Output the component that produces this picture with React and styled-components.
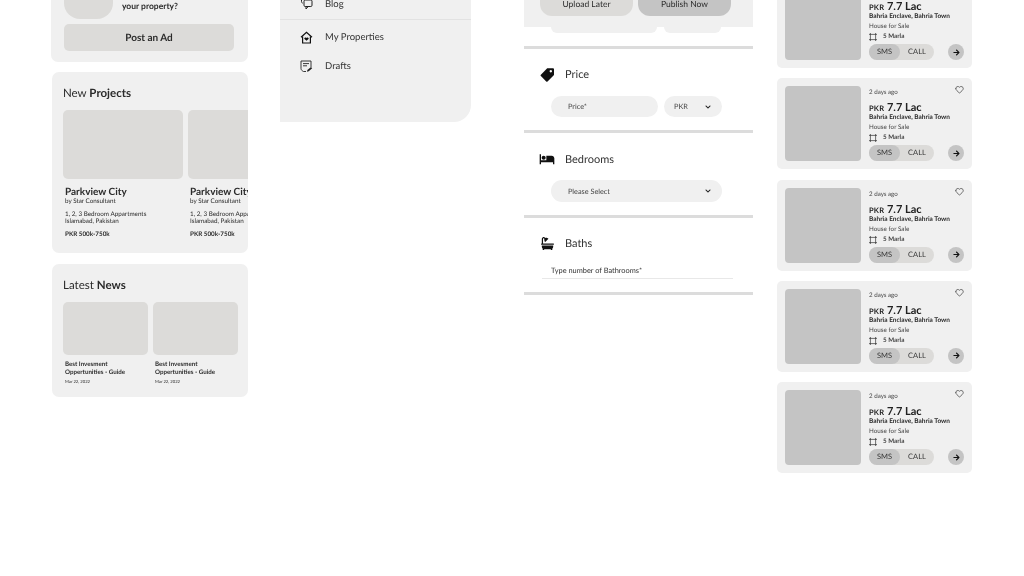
import React from 'react'
import styled, { createGlobalStyle } from 'styled-components'
import { Heart } from 'lucide-react'
import { MdHotel } from 'react-icons/md'
import { FaBath, FaChevronDown, FaArrowRight } from 'react-icons/fa'

const GlobalStyle = createGlobalStyle`
  html, body {
    margin: 0;
    padding: 0;
    background: #fff;
    overflow: hidden;
  }
  * { box-sizing: border-box; }
`

const Page = styled.div`
  width: 1024px;
  height: 576px;
  overflow: hidden;
  display: flex;
  align-items: flex-start;
  padding-left: 52px;
  font-family: Lato, "Liberation Sans", sans-serif;
  text-rendering: geometricPrecision;
  will-change: transform;
  color: #2b2b2b;
`

/* left column */
const LeftColumn = styled.div`
  width: 196px;
  margin-top: -60px;
  display: flex;
  flex-direction: column;
  gap: 11px;
`
const Card = styled.section`
  background: #f0f0f0;
  border-radius: 7px;
  overflow: hidden;
`
const PromoCard = styled(Card)`
  height: 122px;
  margin: 0 0 -1px -1px;
  padding: 60px 14px 0 13px;
`
const PromoTop = styled.div`
  display: flex;
  gap: 9px;
  height: 19px;
`
const Thumb = styled.div`
  width: 49px;
  height: 19px;
  background: #dcdbd9;
  border-radius: 0 0 16px 16px;
`
const PromoText = styled.div`
  font-size: 8.5px;
  font-weight: 700;
  line-height: 12px;
`
const PostButton = styled.div`
  height: 27px;
  margin-top: 5px;
  background: #dcdbd9;
  border-radius: 5px;
  font-size: 10px;
  font-weight: 700;
  line-height: 28px;
  text-align: center;
`
const ProjectsCard = styled(Card)`
  height: 181px;
  padding: 14px 0 0 11px;
`
const NewsCard = styled(Card)`
  height: 133px;
  padding: 14px 0 0 11px;
`
const CardTitle = styled.h2`
  margin: 0 0 8px;
  font-size: 11.5px;
  font-weight: 400;
  line-height: 16px;
  b { font-weight: 700; }
`
const ProjectRow = styled.div`
  display: flex;
  gap: 5px;
  width: 260px;
`
const Project = styled.div`
  width: 120px;
  flex: none;
`
const ProjectImage = styled.div`
  height: 69px;
  background: #dcdbd9;
  border-radius: 5px;
  margin-bottom: 8px;
`
const ProjectInfo = styled.div`
  padding-left: 2px;
`
const ProjectName = styled.div`
  font-size: 10px;
  font-weight: 700;
  line-height: 11px;
  white-space: nowrap;
`
const Small = styled.div`
  font-size: 6.3px;
  line-height: 7.5px;
  white-space: nowrap;
  margin-top: ${p => p.$top || 0}px;
  font-weight: ${p => (p.$bold ? 700 : 400)};
`
const NewsRow = styled.div`
  display: flex;
  gap: 5px;
`
const NewsItem = styled.div`
  width: 85px;
`
const NewsImage = styled.div`
  height: 53px;
  background: #dcdbd9;
  border-radius: 5px;
  margin-bottom: 6px;
`
const NewsText = styled.div`
  padding-left: 2px;
  font-size: 6.2px;
  font-weight: 700;
  line-height: 7.7px;
  white-space: nowrap;
`
const NewsDate = styled.div`
  margin-top: 2px;
  font-size: 4.2px;
  line-height: 7px;
  font-weight: 400;
`

/* menu column */
const Menu = styled.nav`
  width: 191px;
  height: 122px;
  margin-left: 32px;
  background: #f0f0f0;
  border-radius: 0 0 17px 0;
`
const MenuItem = styled.div`
  height: 29px;
  padding-left: 20px;
  display: flex;
  align-items: center;
  gap: 12px;
  font-size: 9.5px;
  color: #333;
  svg { flex: none; }
`
const MenuTop = styled(MenuItem)`
  height: 20px;
  padding-bottom: 11px;
  border-bottom: 1px solid #e2e2e2;
`
const MenuGroup = styled.div`
  padding-top: 3px;
`

/* form column */
const FormColumn = styled.main`
  position: relative;
  width: 229px;
  margin-left: 53px;
`
const ActionBar = styled.div`
  position: absolute;
  top: 0;
  left: 0;
  right: 0;
  height: 27px;
  padding: 0 0 0 16px;
  display: flex;
  align-items: flex-start;
  gap: 5px;
  background: #f0f0f0;
  z-index: 2;
`
const ActionButton = styled.div`
  width: 93px;
  height: 16px;
  border-radius: 0 0 12px 12px;
  background: ${p => (p.$primary ? '#c4c4c4' : '#dcdbd9')};
  font-size: 8.5px;
  line-height: 9px;
  text-align: center;
`
const FormBody = styled.div`
  display: flex;
  flex-direction: column;
`
const Peek = styled.div`
  height: 46px;
  padding: 27px 0 0 27px;
  display: flex;
  gap: 7px;
`
const Rule = styled.div`
  height: 3px;
  background: #dcdcdc;
`
const Section = styled.div`
  height: ${p => p.$height}px;
  padding-top: ${p => p.$top}px;
`
const SectionHead = styled.div`
  height: 16px;
  padding-left: 15px;
  display: flex;
  align-items: center;
  gap: 10px;
  font-size: 11px;
  color: #333;
`
const IconSlot = styled.span`
  width: 16px;
  display: flex;
  justify-content: center;
  color: #111;
`
const FieldRow = styled.div`
  display: flex;
  gap: 6px;
  padding-left: 27px;
  margin-top: ${p => p.$top}px;
`
const Pill = styled.div`
  width: ${p => p.$width}px;
  height: ${p => p.$height || 21}px;
  background: #f0f0f0;
  padding: 0 11px 0 ${p => p.$left || 17}px;
  display: flex;
  align-items: center;
  justify-content: space-between;
  font-size: 7.3px;
  color: #444;
  border-radius: ${p => (p.$clipped ? '0 0 11px 11px' : '11px')};
`
const TextField = styled.div`
  margin: 15px 20px 0 18px;
  height: 13px;
  padding-left: 9px;
  border-bottom: 1px solid #e8e8e8;
  font-size: 7.4px;
  line-height: 10px;
  color: #333;
`

/* listing column */
const ListColumn = styled.div`
  width: 195px;
  margin-left: 24px;
  margin-top: -23px;
  display: flex;
  flex-direction: column;
  gap: 10.3px;
`
const Listing = styled.article`
  height: 91px;
  padding: 8px;
  background: #f0f0f0;
  border-radius: 5px;
  display: flex;
  gap: 8px;
`
const ListingImage = styled.div`
  width: 76px;
  height: 75px;
  background: #c4c4c4;
  border-radius: 4px;
  flex: none;
`
const ListingInfo = styled.div`
  position: relative;
  flex: 1;
`
const Ago = styled.div`
  font-size: 6.2px;
  line-height: 8px;
  margin-top: 3px;
  color: #444;
`
const Favourite = styled.span`
  position: absolute;
  top: -1px;
  right: 0;
  display: flex;
  color: #333;
`
const Price = styled.div`
  margin-top: 5px;
  font-size: 11px;
  font-weight: 700;
  line-height: 11px;
  color: #222;
  small {
    font-size: 7.5px;
    letter-spacing: 0.2px;
  }
`
const Address = styled.div`
  font-size: 6.5px;
  font-weight: 700;
  line-height: 8px;
  white-space: nowrap;
`
const ListingLine = styled.div`
  font-size: 6.3px;
  line-height: 8px;
  margin-top: 2px;
  display: flex;
  align-items: center;
  gap: 6px;
  color: #444;
  font-weight: ${p => (p.$bold ? 700 : 400)};
`
const ListingActions = styled.div`
  position: absolute;
  left: 0;
  right: 0;
  bottom: 0;
  display: flex;
  align-items: center;
  justify-content: space-between;
`
const Contact = styled.div`
  width: 65px;
  height: 16px;
  border-radius: 8px;
  background: #dcdbd9;
  display: flex;
  font-size: 7.5px;
  line-height: 16px;
  color: #333;
  text-align: center;
`
const Sms = styled.span`
  width: 31px;
  border-radius: 8px;
  background: #c4c4c4;
`
const Call = styled.span`
  flex: 1;
`
const Go = styled.span`
  width: 16px;
  height: 16px;
  border-radius: 50%;
  background: #c4c4c4;
  display: flex;
  align-items: center;
  justify-content: center;
  color: #111;
`

const BlogIcon = () => (
  <svg width="13" height="13" viewBox="0 0 13 13" fill="none" stroke="#222" strokeWidth="1">
    <path d="M1.5 0v3.5c0 .9.4 1.4 1.2 1.7" />
    <rect x="4" y="2" width="8" height="6.5" rx="1.2" />
    <path d="M6 8.5v2.5l2.2-2.5" />
  </svg>
)

const HomeIcon = () => (
  <svg width="13" height="13" viewBox="0 0 13 13" fill="none" stroke="#111" strokeWidth="1.2">
    <path d="M1 6.3 6.5 1.2 12 6.3" />
    <path d="M2.6 5.4V12h7.8V5.4" />
    <path d="M6.5 9.8 4.5 8c-.8-1 .8-2.2 2-1 1.2-1.2 2.8 0 2 1z" fill="#111" stroke="none" />
  </svg>
)

const DraftIcon = () => (
  <svg width="13" height="13" viewBox="0 0 13 13" fill="none" stroke="#222" strokeWidth="0.9">
    <path d="M6 11.5H3.5C2.2 10.8 1 10 1 8.5V1h10v6" />
    <path d="M3 3.6h6M3 5.8h4" />
    <path d="M7 11.8 7.4 10l3.6-3 1.2 1.3-3.5 3z" fill="#222" stroke="none" />
  </svg>
)

const TagIcon = () => (
  <svg width="15" height="15" viewBox="0 0 15 15" fill="#111">
    <path
      fillRule="evenodd"
      d="M7.2 1.2 H13 a1 1 0 0 1 1 1 V8 L7.5 14.4 a.9.9 0 0 1-1.3 0 L.9 9.1 a.9.9 0 0 1 0-1.3 Z M10.8 3 a1.2 1.2 0 1 0 .01 0 Z"
    />
  </svg>
)

const PlotIcon = () => (
  <svg width="8" height="8" viewBox="0 0 8 8" fill="none" stroke="#333" strokeWidth="0.7">
    <path d="M1.4 0v8M6.6 0v8M0 1.4h8M0 6.6h8" />
  </svg>
)

const ProjectTile = () => (
  <Project>
    <ProjectImage />
    <ProjectInfo>
      <ProjectName>Parkview City</ProjectName>
      <Small>by Star Consultant</Small>
      <Small $top={5}>1, 2, 3 Bedroom Appartments</Small>
      <Small>Islamabad, Pakistan</Small>
      <Small $top={5} $bold>PKR 500k-750k</Small>
    </ProjectInfo>
  </Project>
)

const NewsTile = () => (
  <NewsItem>
    <NewsImage />
    <NewsText>
      Best Invesment
      <br />
      Oppertunities - Guide
      <NewsDate>Mar 22, 2022</NewsDate>
    </NewsText>
  </NewsItem>
)

const ListingCard = () => (
  <Listing>
    <ListingImage />
    <ListingInfo>
      <Ago>2 days ago</Ago>
      <Favourite>
        <Heart size={9} strokeWidth={1.8} />
      </Favourite>
      <Price>
        <small>PKR</small> 7.7 Lac
      </Price>
      <Address>Bahria Enclave, Bahria Town</Address>
      <ListingLine>House for Sale</ListingLine>
      <ListingLine $bold>
        <PlotIcon />5 Marla
      </ListingLine>
      <ListingActions>
        <Contact>
          <Sms>SMS</Sms>
          <Call>CALL</Call>
        </Contact>
        <Go>
          <FaArrowRight size={7} />
        </Go>
      </ListingActions>
    </ListingInfo>
  </Listing>
)

export default function App() {
  return (
    <Page>
      <GlobalStyle />
      <LeftColumn>
        <PromoCard>
          <PromoTop>
            <Thumb />
            <PromoText>your property?</PromoText>
          </PromoTop>
          <PostButton>Post an Ad</PostButton>
        </PromoCard>
        <ProjectsCard>
          <CardTitle>
            New <b>Projects</b>
          </CardTitle>
          <ProjectRow>
            <ProjectTile />
            <ProjectTile />
          </ProjectRow>
        </ProjectsCard>
        <NewsCard>
          <CardTitle>
            Latest <b>News</b>
          </CardTitle>
          <NewsRow>
            <NewsTile />
            <NewsTile />
          </NewsRow>
        </NewsCard>
      </LeftColumn>

      <Menu>
        <MenuTop>
          <BlogIcon />
          Blog
        </MenuTop>
        <MenuGroup>
          <MenuItem>
            <HomeIcon />
            My Properties
          </MenuItem>
          <MenuItem>
            <DraftIcon />
            Drafts
          </MenuItem>
        </MenuGroup>
      </Menu>

      <FormColumn>
        <ActionBar>
          <ActionButton>Upload Later</ActionButton>
          <ActionButton $primary>Publish Now</ActionButton>
        </ActionBar>
        <FormBody>
          <Peek>
            <Pill $width={106} $height={6} $clipped />
            <Pill $width={57} $height={6} $clipped />
          </Peek>
          <Rule />
          <Section $height={81} $top={17}>
            <SectionHead>
              <IconSlot>
                <TagIcon />
              </IconSlot>
              Price
            </SectionHead>
            <FieldRow $top={14}>
              <Pill $width={107}>Price*</Pill>
              <Pill $width={58} $left={10}>
                PKR
                <FaChevronDown size={6} color="#222" />
              </Pill>
            </FieldRow>
          </Section>
          <Rule />
          <Section $height={82} $top={18}>
            <SectionHead>
              <IconSlot>
                <MdHotel size={20} />
              </IconSlot>
              Bedrooms
            </SectionHead>
            <FieldRow $top={13}>
              <Pill $width={171} $height={22}>
                Please Select
                <FaChevronDown size={6} color="#222" />
              </Pill>
            </FieldRow>
          </Section>
          <Rule />
          <Section $height={74} $top={17}>
            <SectionHead>
              <IconSlot>
                <FaBath size={13} />
              </IconSlot>
              Baths
            </SectionHead>
            <TextField>Type number of Bathrooms*</TextField>
          </Section>
          <Rule />
        </FormBody>
      </FormColumn>

      <ListColumn>
        <ListingCard />
        <ListingCard />
        <ListingCard />
        <ListingCard />
        <ListingCard />
      </ListColumn>
    </Page>
  )
}
